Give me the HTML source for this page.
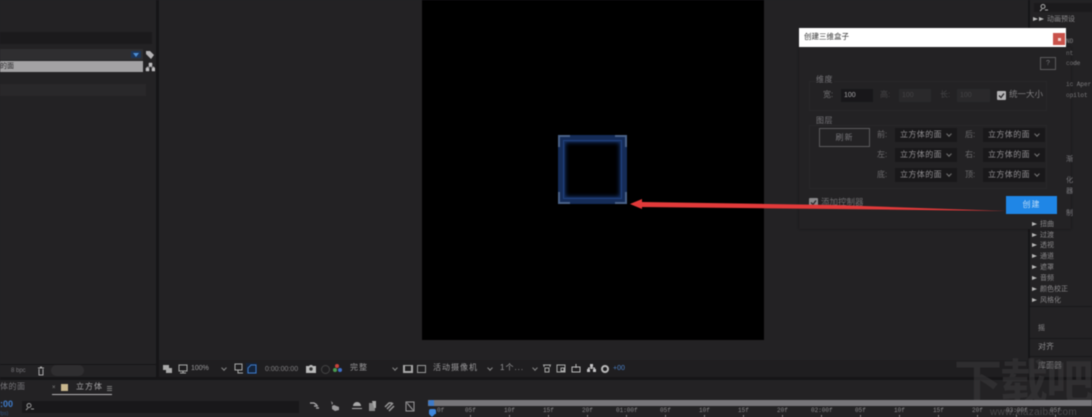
<!DOCTYPE html>
<html><head><meta charset="utf-8"><style>
html,body{margin:0;padding:0;background:#232224}
#r{position:relative;width:1092px;height:417px;overflow:hidden;background:#232224;font-family:"Liberation Sans","Noto Sans CJK SC",sans-serif;color:#8a898b;font-size:7px;filter:blur(.6px)}
#r div,#r span.a{position:absolute}
.t{white-space:nowrap;line-height:1}
.sel{background:#19181a;height:14px;width:62px;color:#918f92;font-size:8px;line-height:14px;letter-spacing:.4px;text-indent:5px}
.sel:after{content:"";position:absolute;right:6px;top:4px;width:3px;height:3px;border-right:1px solid #777;border-bottom:1px solid #777;transform:rotate(45deg)}
.lab{font-size:8px;color:#6f6e70;line-height:1}
.tick{font-size:6px;color:#8a898b;font-family:"Liberation Mono",monospace;top:408px;line-height:1}
.tm{top:415px;width:1px;height:2px;background:#888}
.lst{font-size:7px;color:#8a898b;left:1040px;line-height:1;white-space:nowrap}
.lst:before{content:"";position:absolute;left:-8px;top:1px;border-left:5px solid #bbb;border-top:2.5px solid transparent;border-bottom:2.5px solid transparent}
.mono{font-family:"Liberation Mono",monospace;font-size:6px;color:#6e6d6f;left:1066px;line-height:1;white-space:nowrap}
</style></head><body><div id="r">
<!-- left panel -->
<div style="left:0;top:32px;width:152px;height:12px;background:#1b1a1c"></div>
<div style="left:0;top:49px;width:143px;height:11px;background:#2f2e30"></div>
<div style="left:131px;top:51px;width:10px;height:7px;background:#1d3557"></div>
<div style="left:133px;top:53px;border-top:4px solid #4d8fd6;border-left:3px solid transparent;border-right:3px solid transparent"></div>
<svg style="position:absolute;left:145px;top:50px" width="10" height="10"><path d="M1 1h4l4 4-3 4-5-5z" fill="#b5b4b6"/></svg>
<div style="left:0;top:61px;width:143px;height:11px;background:#a3a2a4"></div>
<div class="t" style="left:0;top:63px;font-size:7px;color:#2b2a2c">的面</div>
<svg style="position:absolute;left:145px;top:62px" width="10" height="10"><path d="M4 1h3v3H4zM1 6h3v3H1zM7 6h3v3H7zM5 4v1H2v1M6 4v1h3v1" fill="#c0bfc1" stroke="#c0bfc1" stroke-width=".5"/></svg>
<div style="left:0;top:84px;width:146px;height:12px;background:#29282a"></div>
<div style="left:156px;top:0;width:3px;height:378px;background:#161517"></div>
<div style="left:0;top:364px;width:156px;height:1px;background:#161517"></div>
<div class="t" style="left:11px;top:368px;font-size:6px;color:#77767a">8 bpc</div>
<svg style="position:absolute;left:37px;top:366px" width="8" height="10"><path d="M1 2h6M2 3v6h4V3M3 1h2" fill="none" stroke="#aaa" stroke-width="1"/></svg>
<div style="left:51px;top:365px;width:33px;height:11px;background:#2f2e30;border-radius:6px"></div>
<!-- comp -->
<div style="left:422px;top:0;width:342px;height:340px;background:#000"></div>
<div style="left:558px;top:135px;width:69px;height:69px;box-sizing:border-box;border:7px solid #152c57;box-shadow:inset 0 0 5px #173a7c"></div>
<div style="left:563px;top:140px;width:59px;height:59px;box-sizing:border-box;border:1px solid #24488c;opacity:.8"></div>
<div style="left:558px;top:135px;width:12px;height:2px;background:#4a6288"></div><div style="left:558px;top:135px;width:2px;height:12px;background:#4a6288"></div>
<div style="left:615px;top:135px;width:12px;height:2px;background:#4a6288"></div><div style="left:625px;top:135px;width:2px;height:12px;background:#4a6288"></div>
<div style="left:558px;top:202px;width:12px;height:2px;background:#4a6288"></div><div style="left:558px;top:192px;width:2px;height:12px;background:#4a6288"></div>
<div style="left:615px;top:202px;width:12px;height:2px;background:#4a6288"></div><div style="left:625px;top:192px;width:2px;height:12px;background:#4a6288"></div>
<!-- right panel -->
<div style="left:1028px;top:0;width:2px;height:378px;background:#161517"></div>
<div style="left:1034px;top:3px;width:58px;height:9px;background:#1b1a1c"></div>
<svg style="position:absolute;left:1039px;top:3px" width="10" height="9"><circle cx="4" cy="3.5" r="2" fill="none" stroke="#aaa"/><path d="M3 6L1 8M6 7h3" stroke="#aaa"/></svg>
<div class="lst" style="left:1047px;top:16px;font-size:7px">动画预设</div>
<div style="left:1033px;top:17px;border-left:5px solid #bbb;border-top:2.5px solid transparent;border-bottom:2.5px solid transparent"></div>
<div class="mono" style="top:39px">ND</div>
<div class="mono" style="top:51px">nt</div>
<div class="mono" style="top:61px">code</div>
<div class="mono" style="top:82px">ic Aper</div>
<div class="mono" style="top:93px">opilot</div>
<div class="t" style="left:1066px;top:156px;font-size:7px;color:#77767a">渐</div>
<div class="t" style="left:1066px;top:177px;font-size:7px;color:#77767a">化</div>
<div class="t" style="left:1066px;top:188px;font-size:7px;color:#77767a">器</div>
<div class="t" style="left:1066px;top:210px;font-size:7px;color:#77767a">制</div>
<div class="lst" style="top:232px">过渡</div>
<div class="lst" style="top:242px">透视</div>
<div class="lst" style="top:253px">通道</div>
<div class="lst" style="top:264px">遮罩</div>
<div class="lst" style="top:275px">音频</div>
<div class="lst" style="top:286px">颜色校正</div>
<div class="lst" style="top:297px">风格化</div>
<div style="left:1030px;top:306px;width:62px;height:1px;background:#18171a"></div>
<div style="left:1030px;top:338px;width:62px;height:1px;background:#18171a"></div>
<div style="left:1030px;top:356px;width:62px;height:1px;background:#18171a"></div>
<div class="t" style="left:1038px;top:325px;font-size:7px;color:#8a898b">摇</div>
<div class="t" style="left:1038px;top:343px;font-size:8px;color:#8a898b">对齐</div>
<div class="t" style="left:1038px;top:362px;font-size:8px;color:#8a898b">库面器</div>
<!-- toolbar -->
<div style="left:159px;top:360px;width:869px;height:17px;background:#1f1e20"></div>
<div style="left:0;top:377px;width:1092px;height:3px;background:#161517"></div>
<svg style="position:absolute;left:162px;top:364px" width="30" height="10"><path d="M1 1h6v5H1zM4 4h6v5H4z" fill="#aaa"/><path d="M17 1h8v6h-8zM21 7v2M18 9h6" fill="none" stroke="#aaa"/></svg>
<div class="t" style="left:191px;top:365px;font-size:7px;color:#9a999b">100%</div>
<div style="left:222px;top:366px;width:3px;height:3px;border-right:1px solid #888;border-bottom:1px solid #888;transform:rotate(45deg)"></div>
<svg style="position:absolute;left:234px;top:363px" width="10" height="11"><path d="M1 1h7v6H1zM4 7v3h5" fill="none" stroke="#aaa"/></svg>
<div style="left:246px;top:363px;width:11px;height:11px;background:#14243c"></div>
<svg style="position:absolute;left:247px;top:364px" width="10" height="10"><path d="M1 9V4l3-3h5v8z" fill="none" stroke="#3f7bc8"/></svg>
<div class="t" style="left:265px;top:366px;font-size:7px;color:#807f81">0:00:00:00</div>
<svg style="position:absolute;left:306px;top:364px" width="10" height="9"><path d="M0 2h3l1-1h2l1 1h3v7H0z" fill="#bbb"/><circle cx="5" cy="5" r="1.7" fill="#333"/></svg>
<div style="left:321px;top:365px;width:7px;height:7px;border-radius:50%;border:1px solid #444"></div>
<div style="left:335px;top:364px;width:4px;height:4px;border-radius:50%;background:#c8443c"></div>
<div style="left:333px;top:368px;width:4px;height:4px;border-radius:50%;background:#4a9c50"></div>
<div style="left:338px;top:368px;width:4px;height:4px;border-radius:50%;background:#3f6fc8"></div>
<div class="t" style="left:350px;top:364px;font-size:8px;color:#9a999b;letter-spacing:1px">完整</div>
<div style="left:393px;top:366px;width:3px;height:3px;border-right:1px solid #888;border-bottom:1px solid #888;transform:rotate(45deg)"></div>
<div style="left:403px;top:365px;width:6px;height:5px;border:1px solid #aaa;border-width:1px 2px 2px"></div>
<div style="left:417px;top:365px;width:7px;height:6px;border:1px solid #999"></div>
<div class="t" style="left:433px;top:364px;font-size:8px;color:#9a999b;letter-spacing:1px">活动摄像机</div>
<div style="left:488px;top:366px;width:3px;height:3px;border-right:1px solid #888;border-bottom:1px solid #888;transform:rotate(45deg)"></div>
<div class="t" style="left:500px;top:364px;font-size:8px;color:#9a999b;letter-spacing:1px">1个...</div>
<div style="left:533px;top:366px;width:3px;height:3px;border-right:1px solid #888;border-bottom:1px solid #888;transform:rotate(45deg)"></div>
<svg style="position:absolute;left:542px;top:363px" width="76" height="11"><path d="M1 2h8M2 2v2M8 2v2M3 5h4v4H3z" fill="none" stroke="#aaa"/><path d="M15 2h8v7h-8zM19 5h3v3h-3z" fill="none" stroke="#aaa"/><path d="M30 4h8v5h-8zM34 1v4" fill="none" stroke="#bbb"/><path d="M48 1h3v3h-3zM45 6h3v3h-3zM51 6h3v3h-3z" fill="#c5c4c6"/><path d="M49.500 4v2M46.500 6V5h6v1" stroke="#c5c4c6" fill="none"/></svg>
<div style="left:601px;top:365px;width:4px;height:4px;border:2px solid #bbb;border-radius:50%"></div>
<div class="t" style="left:613px;top:365px;font-size:7px;color:#4a7fc4">+00</div>
<!-- watermark -->
<div class="t" style="left:954px;top:360px;font-size:48px;font-weight:bold;color:#3e3d3f;opacity:.5;letter-spacing:-2px">下载吧</div>
<div class="t" style="left:990px;top:408px;font-size:10px;color:#4a494b;letter-spacing:.3px">www.xiazaiba.com</div>
<!-- timeline -->
<div class="t" style="left:0;top:383px;font-size:8px;color:#77767a;letter-spacing:.5px">体的面</div>
<div class="t" style="left:52px;top:385px;font-size:6px;color:#888">×</div>
<div style="left:61px;top:384px;width:7px;height:7px;background:#c9b78e"></div>
<div class="t" style="left:76px;top:383px;font-size:8px;color:#a9a8aa;letter-spacing:1px">立方体</div>
<div style="left:107px;top:386px;width:5px;height:1px;background:#777;box-shadow:0 2px #777,0 4px #777"></div>
<div style="left:52px;top:394px;width:60px;height:1px;background:#b5b4b6"></div>
<div class="t" style="left:0;top:400px;font-size:9px;font-weight:bold;color:#3f7bc8">:00</div>
<div class="t" style="left:0;top:412px;font-size:5px;color:#2f4f78">fps)</div>
<div style="left:22px;top:401px;width:277px;height:12px;background:#19181a"></div>
<svg style="position:absolute;left:25px;top:402px" width="12" height="9"><circle cx="4" cy="3.500" r="2" fill="none" stroke="#999"/><path d="M3 6L1 8M6 7h3" stroke="#999"/></svg>
<svg style="position:absolute;left:308px;top:400px" width="112" height="13"><path d="M2 3h4l3 2M6 6h4M8 8h3" fill="none" stroke="#b0afb1" stroke-width="1.300"/><path d="M23 1l2 2-1 2zM26 5l5 2v3l-4 1-3-2v-3z" fill="#9a999b"/><path d="M45 6a4 4 0 0 1 8 0zM44 8h10v1H44z" fill="#aaa"/><path d="M61 3h6v8h-6z" fill="#888"/><path d="M64 1h4v7h-2" fill="#aaa"/><path d="M79 9l6-6M77 7l4-4h3M81 11l5-5" fill="none" stroke="#999" stroke-width="1.500"/><path d="M98 2h8v9h-8zM99 3l6 7" fill="none" stroke="#9a999b"/></svg>
<div style="left:428px;top:400px;width:664px;height:6px;background:#77767a"></div>
<div style="left:428px;top:400px;width:6px;height:6px;background:#3f7bc8;border-radius:3px 0 0 3px"></div>
<div style="left:429px;top:409px;width:7px;height:5px;background:#3f86dc;border-radius:2px 2px 0 0"></div>
<div style="left:429px;top:414px;border-top:3px solid #3f86dc;border-left:3.500px solid transparent;border-right:3.500px solid transparent"></div>
<div class="tick" style="left:437px">0f</div>
<div class="tick" style="left:465px">05f</div><div class="tm" style="left:470px"></div>
<div class="tick" style="left:504px">10f</div><div class="tm" style="left:509px"></div>
<div class="tick" style="left:543px">15f</div><div class="tm" style="left:548px"></div>
<div class="tick" style="left:582px">20f</div><div class="tm" style="left:587px"></div>
<div class="tick" style="left:616px">01:00f</div><div class="tm" style="left:626px"></div>
<div class="tick" style="left:660px">05f</div><div class="tm" style="left:665px"></div>
<div class="tick" style="left:699px">10f</div><div class="tm" style="left:704px"></div>
<div class="tick" style="left:738px">15f</div><div class="tm" style="left:743px"></div>
<div class="tick" style="left:777px">20f</div><div class="tm" style="left:782px"></div>
<div class="tick" style="left:811px">02:00f</div><div class="tm" style="left:821px"></div>
<div class="tick" style="left:855px">05f</div><div class="tm" style="left:860px"></div>
<div class="tick" style="left:894px">10f</div><div class="tm" style="left:899px"></div>
<div class="tick" style="left:933px">15f</div><div class="tm" style="left:938px"></div>
<div class="tick" style="left:972px">20f</div><div class="tm" style="left:977px"></div>
<div class="tick" style="left:1006px">03:00f</div><div class="tm" style="left:1016px"></div>
<div class="tick" style="left:1050px">05f</div><div class="tm" style="left:1055px"></div>
<!-- dialog -->
<div style="left:799px;top:47px;width:272px;height:182px;background:#232224;box-shadow:0 0 2px #151416"></div>
<div style="left:799px;top:28px;width:267px;height:19px;background:#fff"></div>
<div class="t" style="left:804px;top:33px;font-size:7.500px;color:#333">创建三维盒子</div>
<div style="left:1053px;top:33px;width:12px;height:12px;background:#c9524a"></div>
<div style="left:1058px;top:38px;width:3px;height:3px;background:#f3d4d0"></div>
<div class="t" style="left:1040px;top:57px;width:14px;height:11px;border:1px solid #5c5b5d;text-align:center;font-size:7px;line-height:11px;color:#77767a">?</div>
<div class="mono" style="top:39px">ND</div>
<div class="mono" style="top:51px;left:1066px">nt</div>
<div class="mono" style="top:61px">code</div>
<div class="mono" style="top:82px">ic Aper</div>
<div class="mono" style="top:93px">opilot</div>
<div class="t" style="left:1066px;top:156px;font-size:7px;color:#77767a">渐</div>
<div class="t" style="left:1066px;top:177px;font-size:7px;color:#77767a">化</div>
<div class="t" style="left:1066px;top:188px;font-size:7px;color:#77767a">器</div>
<div class="t" style="left:1066px;top:210px;font-size:7px;color:#77767a">制</div>
<div class="lst" style="top:221px;">扭曲</div>
<div style="left:809px;top:81px;width:236px;height:28px;border:1px solid #29282a"></div>
<div style="left:816px;top:76px;background:#232224;font-size:8px;color:#77767a;line-height:1;letter-spacing:.5px;padding-right:1px">维度</div>
<div class="lab" style="left:823px;top:91px">宽:</div>
<div style="left:841px;top:89px;width:32px;height:13px;background:#18171a;color:#a5a4a6;font-size:7px;line-height:13px;text-indent:3px">100</div>
<div class="lab" style="left:880px;top:91px;color:#454446">高:</div>
<div style="left:899px;top:89px;width:32px;height:13px;background:#2a292b;color:#454446;font-size:7px;line-height:13px;text-indent:3px">100</div>
<div class="lab" style="left:940px;top:91px;color:#454446">长:</div>
<div style="left:957px;top:89px;width:33px;height:13px;background:#2a292b;color:#454446;font-size:7px;line-height:13px;text-indent:3px">100</div>
<div style="left:997px;top:91px;width:9px;height:9px;background:#b5b4b6;border-radius:1px"></div>
<svg style="position:absolute;left:997px;top:91px" width="9" height="9"><path d="M2 4.500l2 2 3-4" fill="none" stroke="#2a292b" stroke-width="1.300"/></svg>
<div class="t" style="left:1009px;top:90px;font-size:8.500px;color:#807f81">统一大小</div>
<div style="left:809px;top:125px;width:236px;height:62px;border:1px solid #29282a"></div>
<div style="left:816px;top:117px;background:#232224;font-size:8px;color:#77767a;line-height:1;letter-spacing:.5px;padding-right:1px">图层</div>
<div style="left:819px;top:128px;width:49px;height:17px;border:1px solid #5c5b5d;text-align:center;font-size:8px;line-height:17px;color:#77767a;letter-spacing:1px">刷新</div>
<div class="lab" style="left:877px;top:131px">前:</div><div class="sel" style="left:895px;top:128px">立方体的面</div>
<div class="lab" style="left:965px;top:131px">后:</div><div class="sel" style="left:983px;top:128px">立方体的面</div>
<div class="lab" style="left:877px;top:151px">左:</div><div class="sel" style="left:895px;top:148px">立方体的面</div>
<div class="lab" style="left:965px;top:151px">右:</div><div class="sel" style="left:983px;top:148px">立方体的面</div>
<div class="lab" style="left:877px;top:171px">底:</div><div class="sel" style="left:895px;top:168px">立方体的面</div>
<div class="lab" style="left:965px;top:171px">顶:</div><div class="sel" style="left:983px;top:168px">立方体的面</div>
<div style="left:809px;top:198px;width:9px;height:9px;background:#8a898b;border-radius:1px"></div>
<svg style="position:absolute;left:809px;top:198px" width="9" height="9"><path d="M2 4.500l2 2 3-4" fill="none" stroke="#2a292b" stroke-width="1.300"/></svg>
<div class="t" style="left:821px;top:198px;font-size:8.500px;color:#6f6e70">添加控制器</div>
<div style="left:1006px;top:196px;width:51px;height:18px;background:#1f86e6;text-align:center;font-size:8px;line-height:18px;color:#bcdcf8;letter-spacing:1px">创建</div>
<!-- arrow -->
<svg style="position:absolute;left:625px;top:190px" width="400" height="30"><path d="M5 14L17 9 17 12 210 15 381 21 210 19 17 17 17 19z" fill="#e23a3a"/></svg>
</div></body></html>
